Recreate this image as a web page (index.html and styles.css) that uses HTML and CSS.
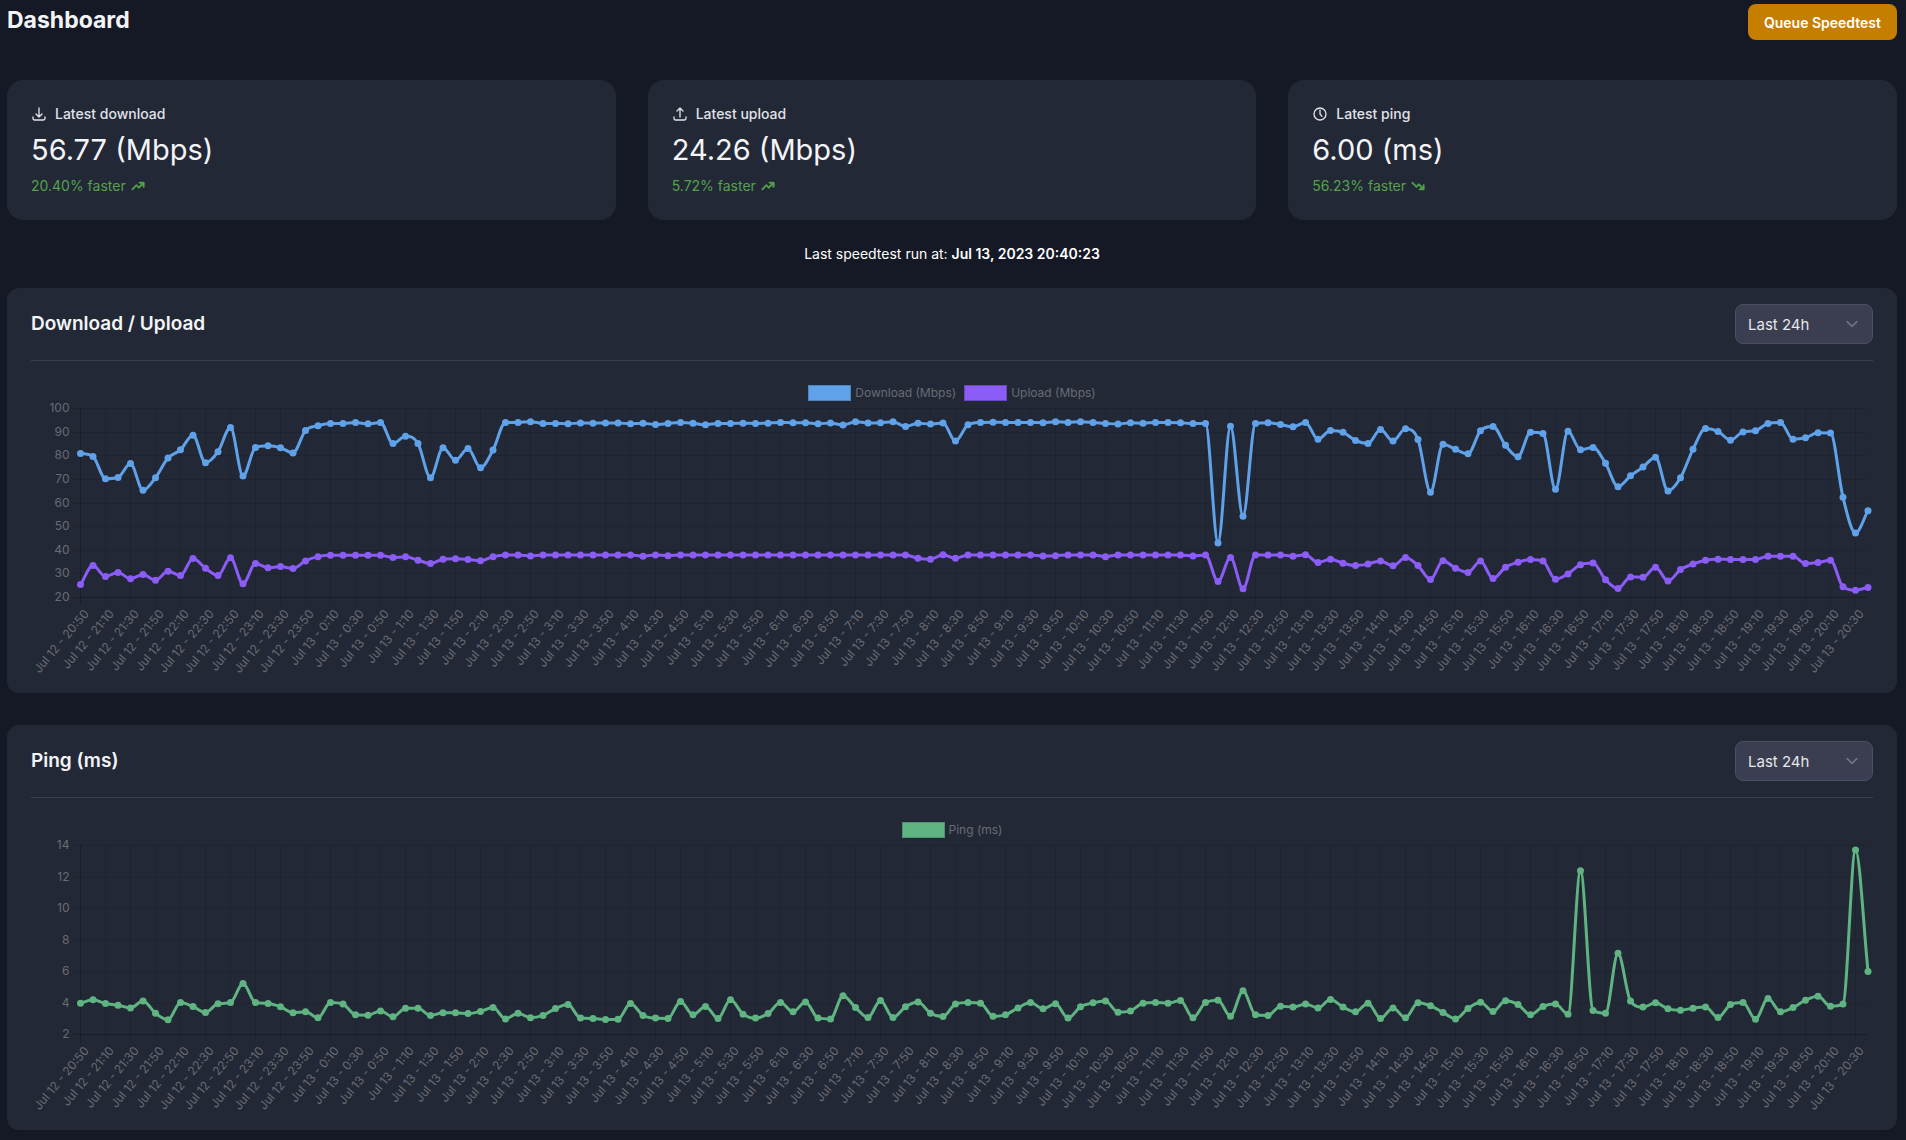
FILE: index.html
```html
<!DOCTYPE html>
<html lang="en">
<head>
    <meta charset="UTF-8">
    <meta name="viewport" content="width=device-width, initial-scale=1.0">
    <title>Dashboard</title>
    <link rel="stylesheet" href="styles.css">
</head>
<body>

    <header class="page-header">
        <h1>Dashboard</h1>
        <button type="button" class="btn">Queue Speedtest</button>
    </header>

    <main>
        <section class="stats">
            <div class="stat">
                <div class="stat-label">
                    <svg class="icon" viewBox="0 0 24 24"><path d="M3 16.5v2.25A2.25 2.25 0 005.25 21h13.5A2.25 2.25 0 0021 18.75V16.5M16.5 12L12 16.5m0 0L7.5 12m4.5 4.5V3"/></svg>
                    <span>Latest download</span>
                </div>
                <div class="stat-value">56.77 (Mbps)</div>
                <div class="stat-change">
                    <span>20.40% faster</span>
                    <svg class="trend" viewBox="0 0 20 20"><path d="M12 7a1 1 0 110-2h5a1 1 0 011 1v5a1 1 0 11-2 0V8.414l-4.293 4.293a1 1 0 01-1.414 0L8 10.414l-4.293 4.293a1 1 0 01-1.414-1.414l5-5a1 1 0 011.414 0L11 10.586 14.586 7H12z"/></svg>
                </div>
            </div>
            <div class="stat">
                <div class="stat-label">
                    <svg class="icon" viewBox="0 0 24 24"><path d="M3 16.5v2.25A2.25 2.25 0 005.25 21h13.5A2.25 2.25 0 0021 18.75V16.5m-13.5-9L12 3m0 0l4.5 4.5M12 3v13.5"/></svg>
                    <span>Latest upload</span>
                </div>
                <div class="stat-value">24.26 (Mbps)</div>
                <div class="stat-change">
                    <span>5.72% faster</span>
                    <svg class="trend" viewBox="0 0 20 20"><path d="M12 7a1 1 0 110-2h5a1 1 0 011 1v5a1 1 0 11-2 0V8.414l-4.293 4.293a1 1 0 01-1.414 0L8 10.414l-4.293 4.293a1 1 0 01-1.414-1.414l5-5a1 1 0 011.414 0L11 10.586 14.586 7H12z"/></svg>
                </div>
            </div>
            <div class="stat">
                <div class="stat-label">
                    <svg class="icon" viewBox="0 0 24 24"><path d="M12 6v6l3 3.500M21 12a9 9 0 11-18 0 9 9 0 0118 0z"/></svg>
                    <span>Latest ping</span>
                </div>
                <div class="stat-value">6.00 (ms)</div>
                <div class="stat-change">
                    <span>56.23% faster</span>
                    <svg class="trend" viewBox="0 0 20 20"><path d="M12 13a1 1 0 100 2h5a1 1 0 001-1V9a1 1 0 10-2 0v2.586l-4.293-4.293a1 1 0 00-1.414 0L8 9.586 3.707 5.293a1 1 0 00-1.414 1.414l5 5a1 1 0 001.414 0L11 9.414 14.586 13H12z"/></svg>
                </div>
            </div>
        </section>

        <p class="last-run">Last speedtest run at: <strong>Jul 13, 2023 20:40:23</strong></p>

        <section class="card">
            <div class="card-header">
                <h2>Download / Upload</h2>
                <div class="filter">
                    <select aria-label="Download / Upload range">
                        <option>Last 24h</option>
                        <option>Last week</option>
                        <option>Last month</option>
                    </select>
                    <svg class="chevron" viewBox="0 0 20 20"><path d="M6 8l4 4 4-4"/></svg>
                </div>
            </div>
            <div class="legend">
                <span class="legend-item"><i class="swatch download"></i>Download (Mbps)</span>
                <span class="legend-item"><i class="swatch upload"></i>Upload (Mbps)</span>
            </div>
            <svg class="chart" id="speedChart"></svg>
        </section>

        <section class="card">
            <div class="card-header">
                <h2>Ping (ms)</h2>
                <div class="filter">
                    <select aria-label="Ping range">
                        <option>Last 24h</option>
                        <option>Last week</option>
                        <option>Last month</option>
                    </select>
                    <svg class="chevron" viewBox="0 0 20 20"><path d="M6 8l4 4 4-4"/></svg>
                </div>
            </div>
            <div class="legend">
                <span class="legend-item"><i class="swatch ping"></i>Ping (ms)</span>
            </div>
            <svg class="chart" id="pingChart"></svg>
        </section>
    </main>

    <script src="charts.js"></script>
</body>
</html>
```

FILE: styles.css
```css
* {
    box-sizing: border-box;
}
body {
    margin: 0;
    padding: 4px 9px 8px 7px;
    background-color: #151825;
    color: #f3f4f6;
    font-family: Inter, "Liberation Sans", sans-serif;
    font-size: 14px;
    line-height: 20px;
}
h1, h2, p {
    margin: 0;
}
h1 {
    font-size: 23px;
    line-height: 32px;
    font-weight: 700;
}
h2 {
    font-size: 19px;
    line-height: 28px;
    font-weight: 600;
}
.page-header {
    display: flex;
    align-items: flex-start;
    justify-content: space-between;
    margin-bottom: 40px;
}
.btn {
    height: 36px;
    padding: 0 16px;
    border: none;
    border-radius: 8px;
    background-color: #c67e00;
    color: #fff;
    font-family: inherit;
    font-size: 14px;
    font-weight: 600;
}
.btn:hover {
    background-color: #d98b05;
}

.stats {
    display: grid;
    grid-template-columns: repeat(3, 1fr);
    gap: 32px;
}
.stat {
    display: flex;
    flex-direction: column;
    gap: 8px;
    padding: 24px;
    border-radius: 16px;
    background-color: #232837;
}
.stat-label {
    display: flex;
    align-items: center;
    gap: 8px;
    color: #e0e2e8;
    font-weight: 500;
}
.icon {
    width: 16px;
    height: 16px;
    fill: none;
    stroke: currentColor;
    stroke-width: 2;
    stroke-linecap: round;
    stroke-linejoin: round;
}
.stat-value {
    font-size: 29px;
    line-height: 36px;
}
.stat-change {
    display: flex;
    align-items: center;
    gap: 4px;
    color: #54a24b;
}
.trend {
    width: 16px;
    height: 16px;
    fill: currentColor;
    stroke: currentColor;
    stroke-width: 0.5;
}

.last-run {
    margin: 24px 0;
    text-align: center;
    color: #fff;
}
.last-run strong {
    font-weight: 600;
}

.card {
    padding: 16px 24px;
    border-radius: 12px;
    background-color: #232837;
}
.card + .card {
    margin-top: 32px;
}
.card-header {
    display: flex;
    align-items: center;
    justify-content: space-between;
    padding-bottom: 16px;
    border-bottom: 1px solid #3a4050;
}
.filter {
    position: relative;
}
.filter select {
    appearance: none;
    width: 138px;
    height: 40px;
    padding: 0 40px 0 12px;
    border: 1px solid #4b5060;
    border-radius: 8px;
    background-color: #3a3e50;
    color: #e5e7eb;
    font-family: inherit;
    font-size: 15px;
}
.chevron {
    position: absolute;
    top: 8px;
    right: 9px;
    width: 24px;
    height: 24px;
    fill: none;
    stroke: #6b7280;
    stroke-width: 1.5;
    stroke-linecap: round;
    stroke-linejoin: round;
    pointer-events: none;
}

.legend {
    display: flex;
    justify-content: center;
    gap: 8px;
    padding-top: 24px;
    color: #696b73;
    font-size: 12px;
    line-height: 16px;
}
.legend-item {
    display: flex;
    gap: 4px;
}
.swatch {
    width: 43px;
    height: 16px;
    border: 1px solid;
}
.download {
    background-color: #5fa2e9;
    border-color: #4f85bf;
}
.upload {
    background-color: #8b5cf6;
    border-color: #6a49bb;
}
.ping {
    background-color: #5fb482;
    border-color: #4f936d;
}

.chart {
    display: block;
    width: 100%;
    height: 276px;
    overflow: visible;
}
.chart text {
    fill: #696b73;
    font-size: 12px;
}
.grid {
    stroke: rgba(0, 0, 0, 0.12);
}
.grid.base {
    stroke: rgba(0, 0, 0, 0.25);
}
.line {
    fill: none;
    stroke-width: 3;
    stroke-linejoin: round;
}
```

FILE: charts.js
```js
const download = [
    81, 79.7, 70.3, 70.8, 76.7, 65.4, 70.7, 79, 82.5, 88.7, 77, 81.7,
    92, 71.4, 83.5, 84.2, 83.4, 81.2, 90.7, 92.7, 93.7, 93.7, 94.1, 93.5,
    94.1, 85.2, 88.3, 85.2, 70.7, 83.4, 78.1, 83.1, 74.9, 82.4, 94.1, 94.1,
    94.4, 93.7, 93.7, 93.5, 93.9, 93.8, 93.9, 93.9, 93.5, 93.8, 93.2, 93.7,
    94.1, 93.8, 93.1, 93.7, 93.7, 93.8, 93.7, 93.8, 94.1, 94, 94, 93.5,
    93.9, 93, 94.4, 93.9, 94, 94.4, 92.4, 93.8, 93.4, 93.9, 86.2, 93.1,
    94.1, 94.2, 94.1, 94.1, 94.1, 94, 94.4, 94.1, 94.4, 94.1, 93.7, 93.4,
    94, 93.8, 94.1, 94.1, 94, 93.6, 93.6, 43.1, 92.5, 54.4, 93.7, 94,
    93.2, 92.3, 94.1, 87, 90.7, 89.9, 86.5, 85.2, 91.1, 86.2, 91.4, 86.9,
    64.6, 84.9, 82.7, 80.8, 90.6, 92.4, 84.4, 79.6, 89.9, 89.4, 65.8, 90.4,
    82.5, 83.5, 76.8, 66.9, 71.5, 75.2, 79.4, 65.1, 70.7, 82.7, 91.5, 90.3,
    86.6, 90.1, 90.6, 93.7, 94.1, 87, 87.6, 89.7, 89.6, 62.4, 47.3, 56.77
];
const upload = [
    25.5, 33.5, 28.9, 30.6, 27.9, 29.7, 27.3, 31.1, 29.3, 36.5, 32.4, 29.3,
    36.8, 25.8, 34.4, 32.6, 33.1, 32.3, 35.5, 37.3, 37.9, 37.9, 37.9, 37.9,
    37.9, 36.9, 37.2, 35.8, 34.4, 36.2, 36.4, 36.1, 35.6, 37.3, 38, 38,
    37.6, 38, 38, 38, 38, 38, 38, 38, 38, 37.5, 38, 37.7,
    38, 38, 38, 38, 38, 38, 38, 38, 38, 38, 38, 38,
    38, 38, 38, 38, 38, 38, 38, 36.6, 36.2, 38.1, 36.6, 38,
    38, 38, 38, 38, 38, 37.6, 37.7, 38, 38, 38, 37.3, 38,
    38, 38, 38, 38, 38, 37.6, 38, 26.8, 36.9, 23.7, 38, 38,
    38, 37.5, 38.1, 34.8, 36.2, 34.5, 33.5, 34.2, 35.5, 33.4, 36.9, 33.5,
    27.6, 35.6, 32.4, 30.6, 35.5, 28, 32.8, 34.9, 36.1, 35.4, 27.7, 30,
    33.9, 34.6, 27.5, 23.8, 28.7, 28.6, 32.8, 27, 31.8, 34.2, 35.8, 36.2,
    36.1, 36.1, 36.1, 37.5, 37.5, 37.5, 34.4, 34.8, 35.8, 24.5, 23.1, 24.26
];
const ping = [
    3.99, 4.2, 3.97, 3.86, 3.69, 4.12, 3.35, 2.93, 4.03, 3.78, 3.4, 3.95,
    4.03, 5.24, 4.03, 3.97, 3.76, 3.38, 3.44, 3.06, 4.03, 3.93, 3.25, 3.23,
    3.5, 3.12, 3.67, 3.67, 3.21, 3.38, 3.38, 3.33, 3.46, 3.71, 2.99, 3.35,
    3.06, 3.21, 3.65, 3.9, 3.04, 3.02, 2.95, 2.97, 3.97, 3.21, 3.04, 3.02,
    4.1, 3.25, 3.78, 3.02, 4.2, 3.29, 3.04, 3.33, 4.03, 3.44, 4.07, 3.04,
    2.99, 4.46, 3.71, 3.08, 4.16, 3.08, 3.76, 4.07, 3.35, 3.14, 3.93, 4.03,
    3.99, 3.16, 3.25, 3.69, 4.03, 3.63, 3.95, 3.04, 3.76, 4.01, 4.12, 3.42,
    3.5, 3.99, 4.03, 3.99, 4.16, 3.06, 4.03, 4.18, 3.16, 4.77, 3.25, 3.21,
    3.8, 3.74, 3.93, 3.69, 4.22, 3.74, 3.44, 3.99, 3.02, 3.69, 3.06, 4.01,
    3.82, 3.4, 2.99, 3.65, 4.05, 3.46, 4.14, 3.9, 3.25, 3.78, 3.93, 3.29,
    12.39, 3.52, 3.35, 7.16, 4.12, 3.74, 4.01, 3.63, 3.54, 3.67, 3.74, 3.08,
    3.9, 4.03, 2.97, 4.29, 3.44, 3.71, 4.18, 4.43, 3.8, 3.93, 13.72, 6
];

// Results come in every 10 minutes, starting Jul 12 at 20:50
function timeLabel(i) {
    const minutes = 20 * 60 + 50 + i * 10;
    const day = 12 + Math.floor(minutes / 1440);
    const hour = Math.floor(minutes / 60) % 24;
    return `Jul ${day} - ${hour}:${minutes % 60}`;
}

// Monotone cubic path, so the line never overshoots a point
function linePath(points) {
    const n = points.length;
    const step = points[1].x - points[0].x;
    const slope = [];
    for (let i = 0; i < n - 1; i++) {
        slope.push((points[i + 1].y - points[i].y) / step);
    }
    const tangent = [slope[0]];
    for (let i = 1; i < n - 1; i++) {
        tangent.push(slope[i - 1] * slope[i] <= 0 ? 0 : (slope[i - 1] + slope[i]) / 2);
    }
    tangent.push(slope[n - 2]);
    for (let i = 0; i < n - 1; i++) {
        if (slope[i] === 0) {
            tangent[i] = tangent[i + 1] = 0;
            continue;
        }
        const a = tangent[i] / slope[i];
        const b = tangent[i + 1] / slope[i];
        const sum = a * a + b * b;
        if (sum > 9) {
            const t = 3 / Math.sqrt(sum);
            tangent[i] = a * t * slope[i];
            tangent[i + 1] = b * t * slope[i];
        }
    }
    let d = `M${points[0].x},${points[0].y}`;
    const third = step / 3;
    for (let i = 0; i < n - 1; i++) {
        const p = points[i];
        const q = points[i + 1];
        d += `C${p.x + third},${p.y + tangent[i] * third} ${q.x - third},${q.y - tangent[i + 1] * third} ${q.x},${q.y}`;
    }
    return d;
}

function drawChart(id, series, min, max, tick) {
    const svg = document.getElementById(id);
    const left = 49.5;
    const right = svg.clientWidth - 5;
    const top = 7.5;
    const bottom = 196.5;
    const count = series[0].data.length;
    const xAt = i => left + (right - left) * i / (count - 1);
    const yAt = v => bottom - (bottom - top) * (v - min) / (max - min);
    let html = "";

    for (let v = min; v <= max; v += tick) {
        const y = Math.floor(yAt(v)) + 0.5;
        html += `<line class="grid${v === min ? " base" : ""}" x1="${left - 7}" x2="${right}" y1="${y}" y2="${y}"/>`;
        html += `<text x="${left - 11}" y="${y + 3}" text-anchor="end">${v}</text>`;
    }
    for (let i = 0; i < count; i += 2) {
        const x = Math.floor(xAt(i)) + 0.5;
        html += `<line class="grid${i === 0 ? " base" : ""}" x1="${x}" x2="${x}" y1="${top}" y2="${bottom + 7}"/>`;
        html += `<text transform="translate(${x + 9} 213) rotate(-50)" text-anchor="end">${timeLabel(i)}</text>`;
    }
    series.forEach(s => {
        const points = s.data.map((v, i) => ({ x: xAt(i), y: yAt(v) }));
        html += `<path class="line" stroke="${s.color}" d="${linePath(points)}"/>`;
        points.forEach(p => {
            html += `<circle cx="${p.x}" cy="${p.y}" r="3.5" fill="${s.color}"/>`;
        });
    });
    svg.innerHTML = html;
}

function drawAll() {
    drawChart("speedChart", [
        { data: upload, color: "#8b5cf6" },
        { data: download, color: "#5fa2e9" }
    ], 20, 100, 10);
    drawChart("pingChart", [{ data: ping, color: "#5fb482" }], 2, 14, 2);
}

drawAll();
window.addEventListener("resize", drawAll);
```
